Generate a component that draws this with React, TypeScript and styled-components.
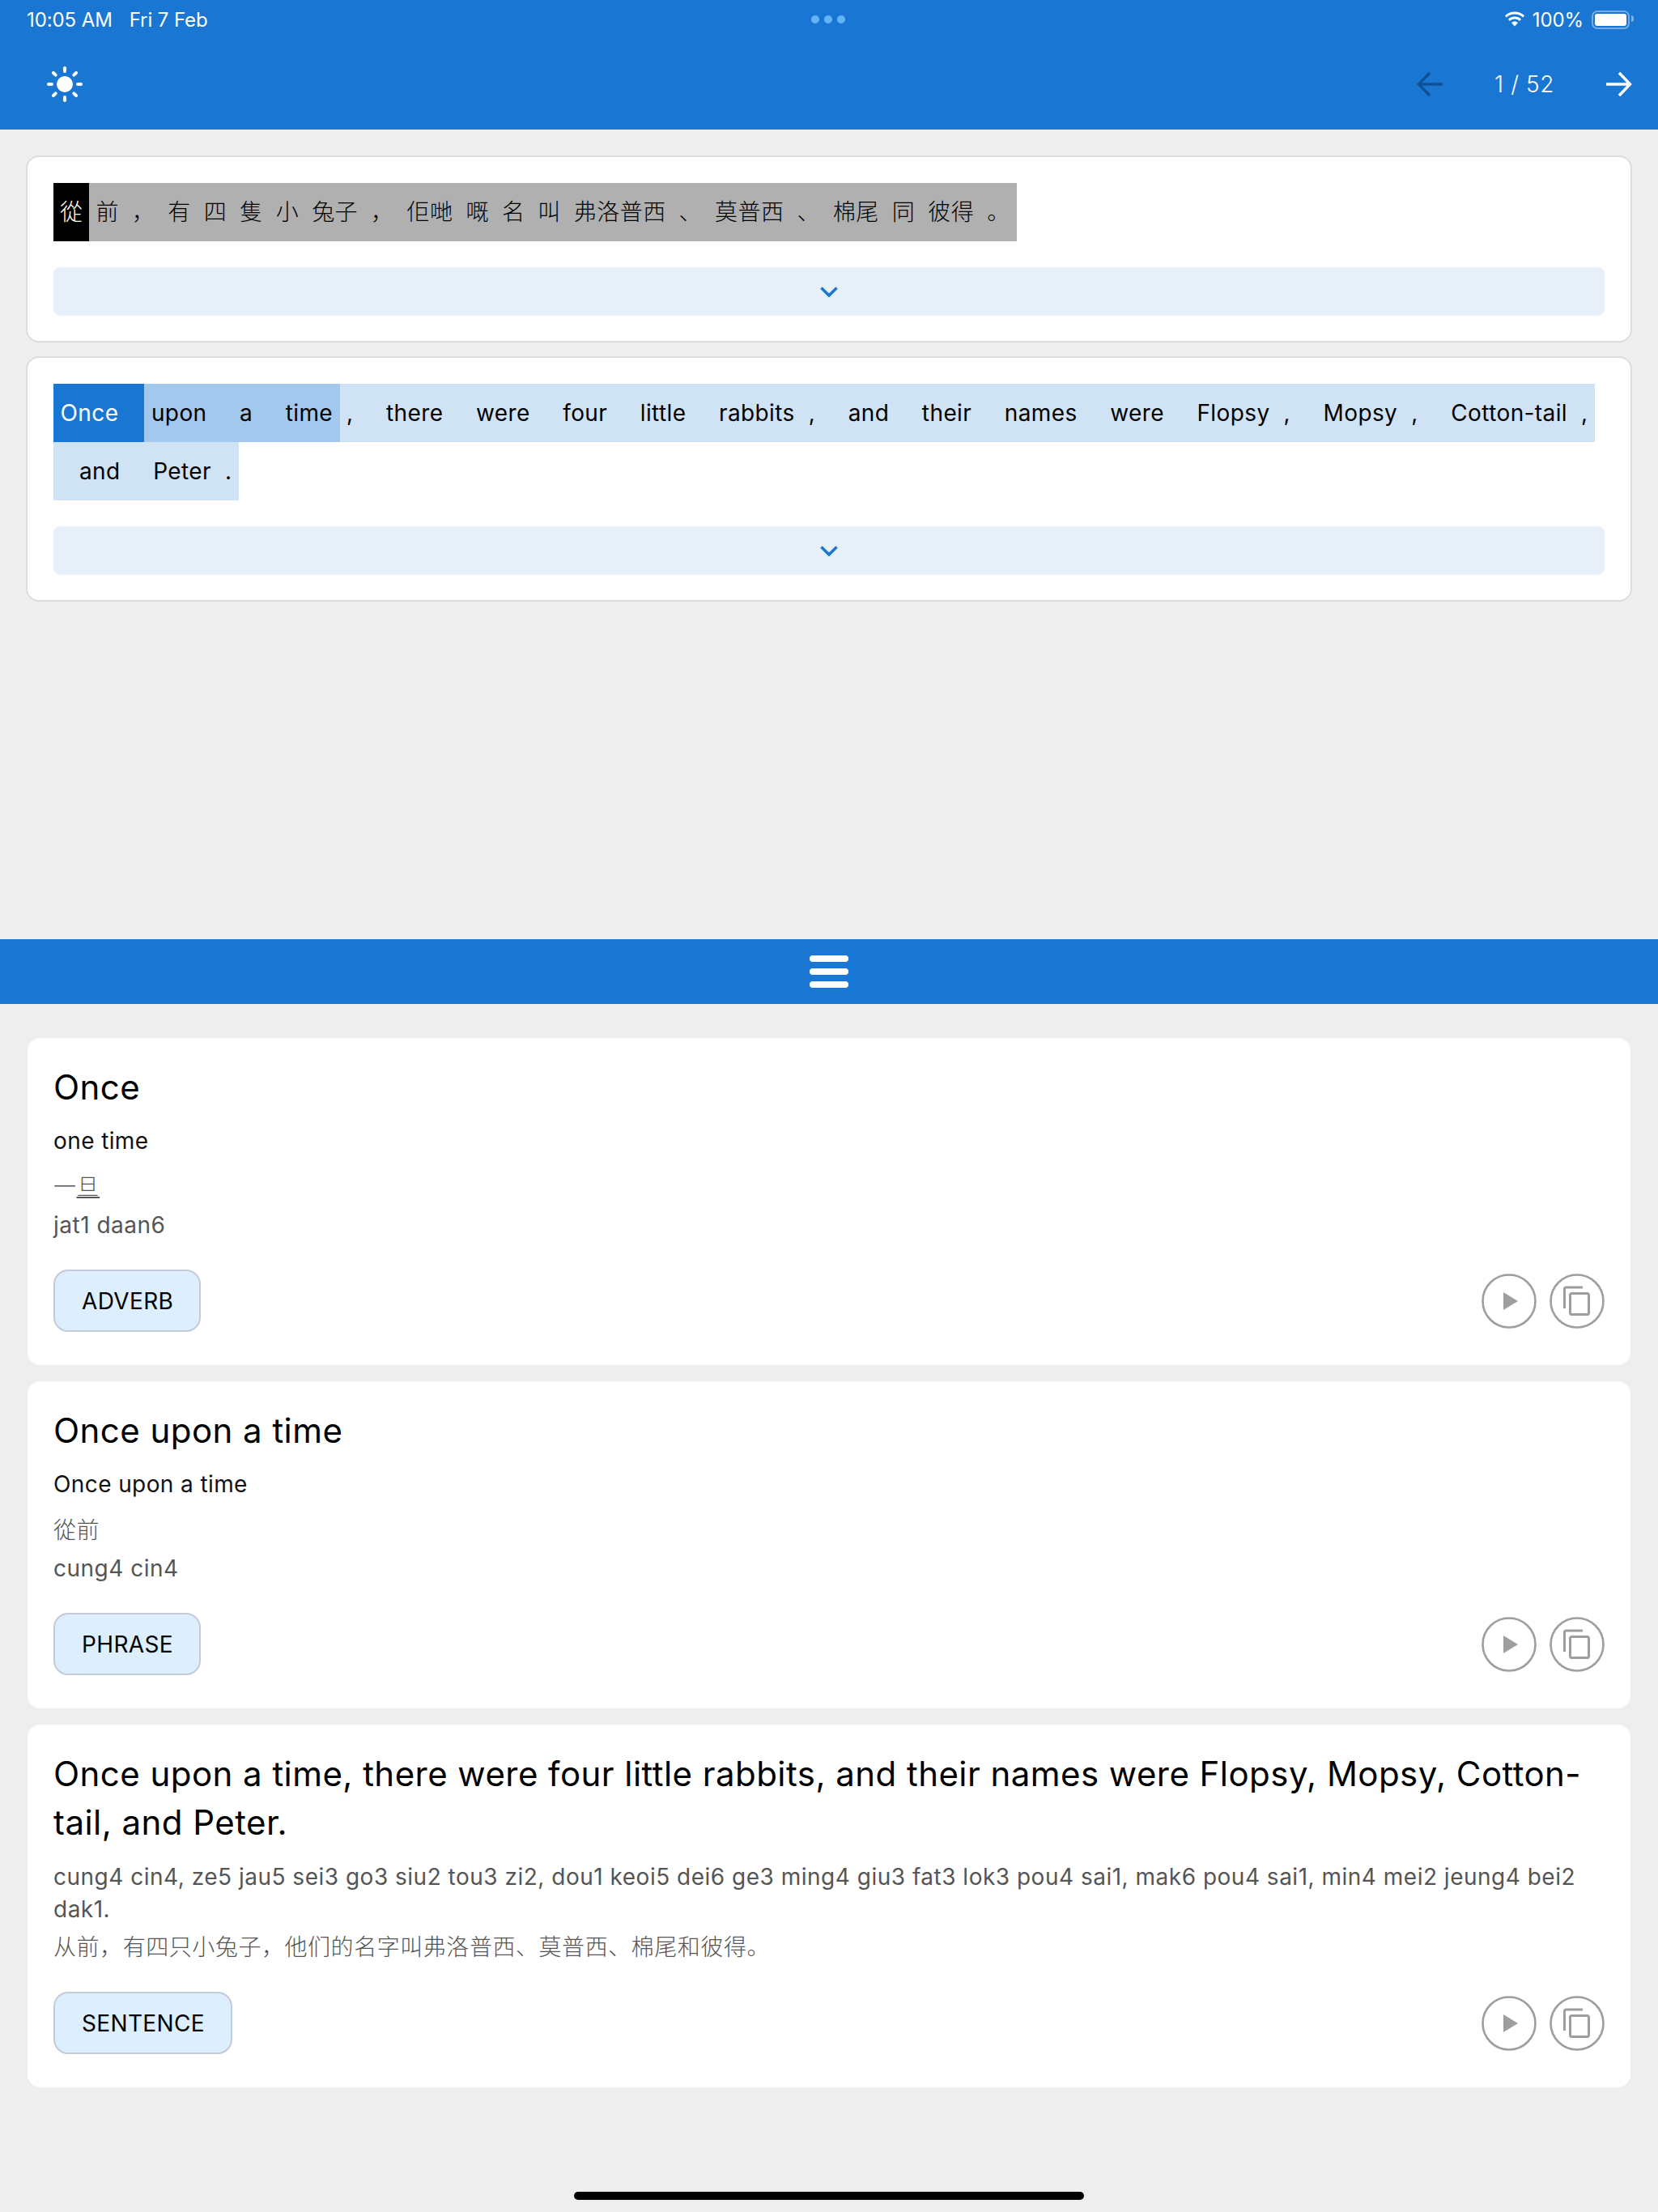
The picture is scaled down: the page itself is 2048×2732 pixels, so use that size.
import React from "react";
import styled, { createGlobalStyle } from "styled-components";

const LATIN = `Inter, "Noto Sans CJK SC", sans-serif`;
const BLUE = "#1976D2";

const GlobalStyle = createGlobalStyle`
  html, body { margin: 0; padding: 0; background: #eeeeee; }
  body { font-family: ${LATIN}; }
  * { box-sizing: border-box; }
`;

const Page = styled.div`
  position: relative;
  width: 2048px;
  height: 2732px;
  display: flex;
  flex-direction: column;
  background: #eeeeee;
  overflow: hidden;
`;

const Header = styled.header`
  height: 160px;
  background: ${BLUE};
  color: #fff;
  display: flex;
  flex-direction: column;
`;

const StatusBar = styled.div`
  height: 48px;
  padding: 0 35px 0 33px;
  display: grid;
  grid-template-columns: 1fr auto 1fr;
  align-items: center;
  font-size: 24px;
  letter-spacing: -0.1px;
`;

const StatusLeft = styled.div`
  display: flex;
  gap: 21px;
`;

const StatusRight = styled.div`
  display: flex;
  justify-content: flex-end;
  align-items: center;
  gap: 8px;
`;

const Dots = styled.div`
  display: flex;
  gap: 6px;
`;

const Dot = styled.span`
  width: 10px;
  height: 10px;
  border-radius: 50%;
  background: #64b5f6;
`;

const Battery = styled.div`
  position: relative;
  width: 47px;
  height: 23px;
  margin-left: 2px;
  padding: 2px;
  border: 2px solid rgba(255, 255, 255, 0.4);
  border-radius: 7px;
  &::before {
    content: "";
    display: block;
    height: 100%;
    background: #fff;
    border-radius: 3px;
  }
  &::after {
    content: "";
    position: absolute;
    right: -7px;
    top: 4px;
    width: 3px;
    height: 8px;
    background: rgba(255, 255, 255, 0.45);
    border-radius: 0 3px 3px 0;
  }
`;

const Toolbar = styled.div`
  flex: 1;
  padding: 0 32px 0 58px;
  display: flex;
  align-items: center;
  justify-content: space-between;
`;

const Pager = styled.div`
  display: flex;
  align-items: center;
`;

const PageCount = styled.span`
  width: 202px;
  text-align: center;
  font-size: 28px;
  font-weight: 300;
  letter-spacing: 0.6px;
`;

const TopPane = styled.section`
  flex: 1;
  padding: 32px;
  display: flex;
  flex-direction: column;
  gap: 17px;
`;

const SentenceCard = styled.div`
  background: #fff;
  border: 2px solid #dcdcdc;
  border-radius: 16px;
  padding: 32px 32px 31px;
`;

const TokenRow = styled.div`
  display: flex;
  flex-wrap: wrap;
  font-size: 28px;
  line-height: 72px;
  letter-spacing: 0.4px;
  color: #000;
`;

const Token = styled.span<{ $bg: string; $fg?: string }>`
  padding: 0 8.5px;
  height: 72px;
  background: ${(p) => p.$bg};
  color: ${(p) => p.$fg || "#000"};
`;

const CjkToken = styled(Token)`
  padding: 0 8px;
  font-weight: 300;
  letter-spacing: 0.45px;
`;

const Spacer = styled.span<{ $bg: string }>`
  width: 23.5px;
  height: 72px;
  background: ${(p) => p.$bg};
`;

const ExpandButton = styled.div`
  height: 60px;
  margin-top: 32px;
  background: #e7eff9;
  border-radius: 8px;
  display: flex;
  align-items: center;
  justify-content: center;
`;

const SplitBar = styled.div`
  height: 80px;
  background: ${BLUE};
  display: flex;
  flex-direction: column;
  align-items: center;
  justify-content: center;
  gap: 8px;
`;

const SplitLine = styled.span`
  width: 48px;
  height: 8px;
  border-radius: 4px;
  background: #fff;
`;

const BottomPane = styled.section`
  height: 1492px;
  padding: 42px 34px 0;
  display: flex;
  flex-direction: column;
  gap: 20px;
`;

const EntryCard = styled.article`
  background: #fff;
  border-radius: 16px;
  padding: 31px 32px 41px;
`;

const Title = styled.h2`
  margin: 0;
  font-size: 42px;
  font-weight: 400;
  line-height: 60px;
  letter-spacing: 0.45px;
  color: #000;
`;

const Meaning = styled.p`
  margin: 16px 0 0;
  font-size: 28px;
  line-height: 40px;
  letter-spacing: 0.4px;
  color: #111;
`;

const Translation = styled.p<{ $gap?: number }>`
  margin: ${(p) => p.$gap ?? 17}px 0 0;
  font-size: 28px;
  font-weight: 300;
  line-height: 40px;
  letter-spacing: 0.55px;
  color: #555;
`;

const Underlined = styled.span`
  text-decoration: underline;
`;

const Pronunciation = styled.p<{ $gap?: number }>`
  margin: ${(p) => p.$gap ?? 7}px 0 0;
  font-size: 28px;
  line-height: 40px;
  letter-spacing: 0.5px;
  color: #555;
`;

const CardFooter = styled.div`
  margin-top: 35px;
  display: flex;
  align-items: center;
  justify-content: space-between;
`;

const Tag = styled.span`
  height: 77px;
  padding: 0 32px 0 33px;
  display: inline-flex;
  align-items: center;
  background: #ddeeff;
  border: 2px solid #c3cbd9;
  border-radius: 18px;
  font-size: 28px;
  letter-spacing: 0.35px;
  color: #000;
`;

const Actions = styled.div`
  display: flex;
  gap: 16px;
`;

const HomeIndicator = styled.div`
  position: absolute;
  left: 709px;
  bottom: 15px;
  width: 630px;
  height: 10px;
  border-radius: 5px;
  background: #000;
`;

const WifiIcon = () => (
  <svg width="28" height="20" viewBox="0 0 28 20" fill="#fff">
    <path d="M14 3.6c3.9 0 7.5 1.5 10.2 4l1.9-2.1C22.9 2.4 18.700.6 14 .6S5.100 2.400 1.900 5.500l1.900 2.100c2.700-2.500 6.300-4 10.200-4z" />
    <path d="M14 9.600c2.300 0 4.400.9 6 2.300l2-2.100c-2.100-2-5-3.200-8-3.200s-5.900 1.200-8 3.200l2 2.100c1.600-1.400 3.700-2.300 6-2.300z" />
    <path d="M14 12.600c-1.500 0-2.900.6-4 1.500l4 4.500 4-4.500c-1.100-.9-2.500-1.500-4-1.500z" />
  </svg>
);

const SunIcon = () => (
  <svg width="44" height="44" viewBox="0 0 44 44" fill="#fff">
    <circle cx="22" cy="22" r="10" />
    {[0, 45, 90, 135, 180, 225, 270, 315].map((a) => (
      <rect key={a} x="20" y="0" width="4" height="8" rx="2" transform={`rotate(${a} 22 22)`} />
    ))}
  </svg>
);

const ArrowIcon = ({ left, color }: { left?: boolean; color: string }) => (
  <svg width="32" height="32" viewBox="0 0 32 32" fill="none" stroke={color} strokeWidth="3.400">
    <path d={left ? "M32 16H3M16 2 2.500 16 16 30" : "M0 16h29M16 2l13.500 14L16 30"} />
  </svg>
);

const ChevronIcon = () => (
  <svg width="22" height="13" viewBox="0 0 22 13" fill="none" stroke={BLUE} strokeWidth="3.500">
    <path d="M1.500 1.500 11 11l9.500-9.500" />
  </svg>
);

const PlayIcon = () => (
  <svg width="68" height="68" viewBox="0 0 68 68" fill="none">
    <circle cx="34" cy="34" r="32.500" stroke="#9e9e9e" strokeWidth="2.600" />
    <path d="M27 23l18 11-18 11z" fill="#9e9e9e" />
  </svg>
);

const CopyIcon = () => (
  <svg width="68" height="68" viewBox="0 0 68 68" fill="none" stroke="#9e9e9e">
    <circle cx="34" cy="34" r="32.500" strokeWidth="2.600" />
    <path d="M18.500 43V19a2 2 0 0 1 2-2H41" strokeWidth="3" />
    <rect x="25.500" y="24.500" width="23" height="26" rx="2" strokeWidth="3" />
  </svg>
);

const GREY = "#b0b0b0";
const cjkTokens = ["前", "，", "有", "四", "隻", "小", "兔子", "，", "佢哋", "嘅", "名", "叫", "弗洛普西", "、", "莫普西", "、", "棉尾", "同", "彼得", "。"];

const LIGHT = "#d0e3f5";
const MID = "#a3c8ee";
// word, then whether a gap follows it
const englishTokens: [string, string, boolean][] = [
  ["upon", MID, true],
  ["a", MID, true],
  ["time", MID, false],
  [",", LIGHT, true],
  ["there", LIGHT, true],
  ["were", LIGHT, true],
  ["four", LIGHT, true],
  ["little", LIGHT, true],
  ["rabbits", LIGHT, false],
  [",", LIGHT, true],
  ["and", LIGHT, true],
  ["their", LIGHT, true],
  ["names", LIGHT, true],
  ["were", LIGHT, true],
  ["Flopsy", LIGHT, false],
  [",", LIGHT, true],
  ["Mopsy", LIGHT, false],
  [",", LIGHT, true],
  ["Cotton-tail", LIGHT, false],
  [",", LIGHT, true],
  ["and", LIGHT, true],
  ["Peter", LIGHT, false],
  [".", LIGHT, false],
];

const CardActions = () => (
  <Actions>
    <PlayIcon />
    <CopyIcon />
  </Actions>
);

export default function App() {
  return (
    <Page>
      <GlobalStyle />
      <Header>
        <StatusBar>
          <StatusLeft>
            <span>10:05 AM</span>
            <span>Fri 7 Feb</span>
          </StatusLeft>
          <Dots>
            <Dot />
            <Dot />
            <Dot />
          </Dots>
          <StatusRight>
            <WifiIcon />
            <span>100%</span>
            <Battery />
          </StatusRight>
        </StatusBar>
        <Toolbar>
          <SunIcon />
          <Pager>
            <ArrowIcon left color="#0f5196" />
            <PageCount>1 / 52</PageCount>
            <ArrowIcon color="#fff" />
          </Pager>
        </Toolbar>
      </Header>

      <TopPane>
        <SentenceCard>
          <TokenRow>
            <CjkToken $bg="#000" $fg="#fff">從</CjkToken>
            {cjkTokens.map((t, i) => (
              <CjkToken key={i} $bg={GREY}>{t}</CjkToken>
            ))}
          </TokenRow>
          <ExpandButton>
            <ChevronIcon />
          </ExpandButton>
        </SentenceCard>
        <SentenceCard>
          <TokenRow>
            <Token $bg={BLUE} $fg="#fff">Once</Token>
            <Spacer $bg={BLUE} />
            {englishTokens.map(([word, bg, gap], i) => (
              <React.Fragment key={i}>
                <Token $bg={bg}>{word}</Token>
                {gap && <Spacer $bg={bg} />}
              </React.Fragment>
            ))}
          </TokenRow>
          <ExpandButton>
            <ChevronIcon />
          </ExpandButton>
        </SentenceCard>
      </TopPane>

      <SplitBar>
        <SplitLine />
        <SplitLine />
        <SplitLine />
      </SplitBar>

      <BottomPane>
        <EntryCard>
          <Title>Once</Title>
          <Meaning>one time</Meaning>
          <Translation>一<Underlined>旦</Underlined></Translation>
          <Pronunciation>jat1 daan6</Pronunciation>
          <CardFooter>
            <Tag>ADVERB</Tag>
            <CardActions />
          </CardFooter>
        </EntryCard>
        <EntryCard>
          <Title>Once upon a time</Title>
          <Meaning>Once upon a time</Meaning>
          <Translation>從前</Translation>
          <Pronunciation>cung4 cin4</Pronunciation>
          <CardFooter>
            <Tag>PHRASE</Tag>
            <CardActions />
          </CardFooter>
        </EntryCard>
        <EntryCard>
          <Title>Once upon a time, there were four little rabbits, and their names were Flopsy, Mopsy, Cotton-tail, and Peter.</Title>
          <Pronunciation $gap={17}>cung4 cin4, ze5 jau5 sei3 go3 siu2 tou3 zi2, dou1 keoi5 dei6 ge3 ming4 giu3 fat3 lok3 pou4 sai1, mak6 pou4 sai1, min4 mei2 jeung4 bei2 dak1.</Pronunciation>
          <Translation $gap={7}>从前，有四只小兔子，他们的名字叫弗洛普西、莫普西、棉尾和彼得。</Translation>
          <CardFooter>
            <Tag>SENTENCE</Tag>
            <CardActions />
          </CardFooter>
        </EntryCard>
      </BottomPane>

      <HomeIndicator />
    </Page>
  );
}
